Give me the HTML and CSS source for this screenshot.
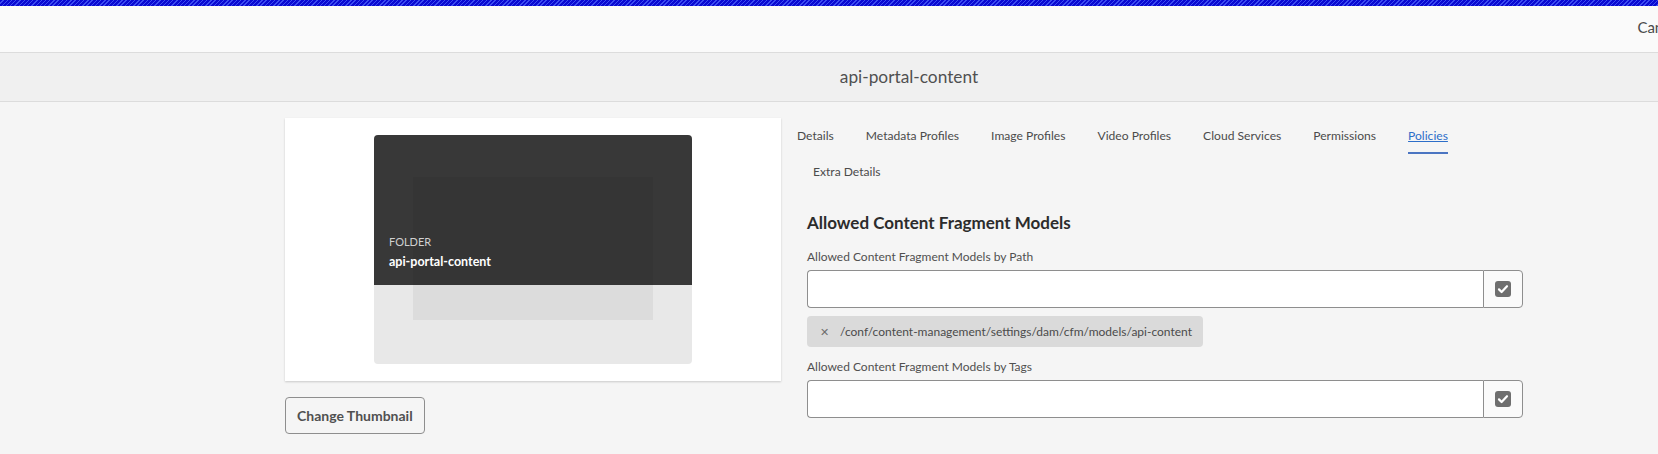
FILE: index.html
```html
<!DOCTYPE html>
<html lang="en">
<head>
<meta charset="utf-8">
<title>api-portal-content</title>
<link rel="stylesheet" href="styles.css">
</head>
<body>
<div class="page">
  <div class="stripe"></div>
  <header class="topbar">
    <div class="actions">
      <button class="btn-quiet">Cancel</button>
      <button class="btn-primary">Save &amp; Close</button>
    </div>
  </header>
  <div class="titlebar"><h1 class="title">api-portal-content</h1></div>
  <main class="content">
    <section class="left">
      <div class="card">
        <div class="thumb">
          <div class="thumb-placeholder"></div>
          <div class="thumb-overlay">
            <div class="thumb-type">FOLDER</div>
            <div class="thumb-name">api-portal-content</div>
          </div>
        </div>
      </div>
      <button class="btn-secondary">Change Thumbnail</button>
    </section>
    <section class="right">
      <nav class="tabs">
        <div class="tab-row">
          <a class="tab">Details</a>
          <a class="tab">Metadata Profiles</a>
          <a class="tab">Image Profiles</a>
          <a class="tab">Video Profiles</a>
          <a class="tab">Cloud Services</a>
          <a class="tab">Permissions</a>
          <a class="tab tab-active">Policies</a>
        </div>
        <div class="tab-row tab-row-second">
          <a class="tab">Extra Details</a>
        </div>
      </nav>
      <div class="panel">
        <h2 class="heading">Allowed Content Fragment Models</h2>
        <label class="field-label">Allowed Content Fragment Models by Path</label>
        <div class="input-group">
          <input class="text-input" type="text">
          <button class="picker-btn" aria-label="Select">
            <svg class="check" viewBox="0 0 16 16" width="16" height="16"><rect x="0" y="0" width="16" height="16" rx="3" fill="#6e6e6e"/><path d="M4 8.4l2.6 2.6L12 5.2" fill="none" stroke="#fff" stroke-width="2.2" stroke-linecap="round" stroke-linejoin="round"/></svg>
          </button>
        </div>
        <div class="tags">
          <span class="tag"><span class="tag-x">&#x2715;</span><span class="tag-text">/conf/content-management/settings/dam/cfm/models/api-content</span></span>
        </div>
        <label class="field-label">Allowed Content Fragment Models by Tags</label>
        <div class="input-group">
          <input class="text-input" type="text">
          <button class="picker-btn" aria-label="Select">
            <svg class="check" viewBox="0 0 16 16" width="16" height="16"><rect x="0" y="0" width="16" height="16" rx="3" fill="#6e6e6e"/><path d="M4 8.4l2.6 2.6L12 5.2" fill="none" stroke="#fff" stroke-width="2.2" stroke-linecap="round" stroke-linejoin="round"/></svg>
          </button>
        </div>
      </div>
    </section>
  </main>
</div>
</body>
</html>
```

FILE: styles.css
```css
html, body {
  margin: 0;
  padding: 0;
  background: #f5f5f5;
  overflow: hidden;
}
body {
  font-family: Lato, "Open Sans", "Liberation Sans", sans-serif;
  color: #4b4b4b;
}
.page {
  width: 1818px;
  min-height: 454px;
  background: #f5f5f5;
}
.stripe {
  height: 6px;
  background: repeating-linear-gradient(135deg, #0a0ad2 0px, #0a0ad2 2px, #3c4cf0 2px, #3c4cf0 3px);
}
.topbar {
  height: 46px;
  background: #fafafa;
  border-bottom: 1px solid #dcdcdc;
  display: flex;
  justify-content: flex-end;
  align-items: center;
}
.actions {
  display: flex;
  align-items: center;
  gap: 8px;
  padding-right: 6px;
}
.btn-quiet {
  font-family: inherit;
  font-size: 15px;
  color: #4b4b4b;
  background: none;
  border: 0;
  padding: 0 8px;
  height: 32px;
  margin-top: -4px;
}
.btn-primary {
  font-family: inherit;
  font-size: 15px;
  font-weight: 700;
  color: #fff;
  background: #1473e6;
  border: 0;
  border-radius: 4px;
  height: 32px;
  padding: 0 14px;
}
.titlebar {
  height: 48px;
  background: #f0f0f0;
  border-bottom: 1px solid #dcdcdc;
  display: flex;
  align-items: center;
  justify-content: center;
}
.title {
  margin: 0;
  font-size: 17.3px;
  font-weight: 400;
  color: #505050;
  line-height: 24px;
}
.content {
  width: 1248px;
  margin: 0 auto;
  padding-top: 16px;
  display: grid;
  grid-template-columns: 496px 1fr;
}
.left {
  display: flex;
  flex-direction: column;
  align-items: flex-start;
}
.card {
  width: 496px;
  box-sizing: border-box;
  background: #fff;
  padding: 17px 0;
  display: flex;
  justify-content: center;
  box-shadow: 0 1px 2px rgba(0, 0, 0, 0.18);
}
.thumb {
  position: relative;
  width: 318px;
  height: 229px;
  background: #e8e8e8;
  border-radius: 4px;
  overflow: hidden;
}
.thumb-placeholder {
  width: 240px;
  height: 143px;
  margin: 42px 0 0 39px;
  background: #dcdcdc;
}
.thumb-overlay {
  position: absolute;
  left: 0;
  top: 0;
  right: 0;
  height: 150px;
  background: rgba(0, 0, 0, 0.76);
  box-sizing: border-box;
  padding: 0 15px 14px;
  display: flex;
  flex-direction: column;
  justify-content: flex-end;
}
.thumb-type {
  font-size: 11px;
  color: #d0d0d0;
  line-height: 16px;
  margin-bottom: 3px;
}
.thumb-name {
  font-size: 12.5px;
  font-weight: 700;
  color: #fff;
  line-height: 18px;
}
.btn-secondary {
  margin-top: 16px;
  height: 37px;
  padding: 0 11px;
  font-family: inherit;
  font-size: 14px;
  font-weight: 700;
  color: #505050;
  background: transparent;
  border: 1px solid #8e8e8e;
  border-radius: 4px;
}
.right {
  display: flex;
  flex-direction: column;
}
.tabs {
  display: flex;
  flex-direction: column;
}
.tab-row {
  display: flex;
  gap: 32px;
  padding-left: 16px;
  height: 36px;
  align-items: stretch;
}
.tab-row-second {
  padding-left: 32px;
}
.tab {
  font-size: 12.1px;
  color: #4b4b4b;
  line-height: 36px;
  cursor: pointer;
}
.tab-active {
  color: #2d6ec9;
  text-decoration: underline;
  box-shadow: inset 0 -2px 0 #4b75c2;
}
.panel {
  width: 716px;
  padding-left: 26px;
  display: flex;
  flex-direction: column;
}
.heading {
  margin: 21px 0 13px;
  font-size: 17px;
  font-weight: 700;
  color: #2c2c2c;
  line-height: 24px;
}
.field-label {
  font-size: 12px;
  line-height: 18px;
  color: #505050;
  margin-bottom: 4px;
}
.input-group {
  display: flex;
  height: 38px;
}
.text-input {
  flex: 1;
  box-sizing: border-box;
  height: 38px;
  margin: 0;
  border: 1px solid #8e8e8e;
  border-right: 0;
  border-radius: 4px 0 0 4px;
  background: #fff;
  font-family: inherit;
  font-size: 14px;
  padding: 0 10px;
  outline: none;
}
.picker-btn {
  width: 40px;
  height: 38px;
  box-sizing: border-box;
  margin: 0;
  padding: 0;
  border: 1px solid #8e8e8e;
  border-radius: 0 4px 4px 0;
  background: #fafafa;
  display: flex;
  align-items: center;
  justify-content: center;
}
.check {
  display: block;
}
.tags {
  display: flex;
  margin: 8px 0 11px;
}
.tag {
  display: inline-flex;
  align-items: center;
  height: 31px;
  box-sizing: border-box;
  padding: 0 11px 0 13px;
  background: #dadada;
  border-radius: 4px;
  font-size: 12px;
  color: #4b4b4b;
}
.tag-x {
  font-size: 11px;
  color: #6e6e6e;
  width: 8px;
  margin-right: 12px;
}
.tag-text {
  white-space: nowrap;
}
```
